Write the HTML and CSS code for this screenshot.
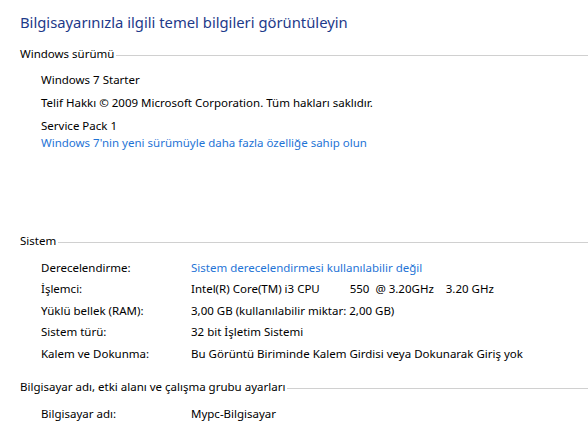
FILE: index.html
```html
<!DOCTYPE html>
<html lang="tr">
<head>
<meta charset="utf-8">
<title>Sistem</title>
<link rel="stylesheet" href="styles.css">
</head>
<body>
<main class="page">
  <h1 class="title">Bilgisayarınızla ilgili temel bilgileri görüntüleyin</h1>

  <section class="sec sec-version">
    <div class="sec-head"><span class="sec-name">Windows sürümü</span><span class="sec-line"></span></div>
    <div class="rows rows-version">
      <div class="row">Windows 7 Starter</div>
      <div class="row">Telif Hakkı © 2009 Microsoft Corporation. Tüm hakları saklıdır.</div>
      <div class="sp">
        <div>Service Pack 1</div>
        <a class="link" href="#">Windows 7'nin yeni sürümüyle daha fazla özelliğe sahip olun</a>
      </div>
    </div>
  </section>

  <section class="sec sec-system">
    <div class="sec-head"><span class="sec-name">Sistem</span><span class="sec-line"></span></div>
    <div class="rows rows-grid">
      <div class="label">Derecelendirme:</div>
      <div class="value"><a class="link" href="#">Sistem derecelendirmesi kullanılabilir değil</a></div>
      <div class="label">İşlemci:</div>
      <div class="value pre">Intel(R) Core(TM) i3 CPU          550  @ 3.20GHz    3.20 GHz</div>
      <div class="label">Yüklü bellek (RAM):</div>
      <div class="value">3,00 GB (kullanılabilir miktar: 2,00 GB)</div>
      <div class="label">Sistem türü:</div>
      <div class="value">32 bit İşletim Sistemi</div>
      <div class="label">Kalem ve Dokunma:</div>
      <div class="value">Bu Görüntü Biriminde Kalem Girdisi veya Dokunarak Giriş yok</div>
    </div>
  </section>

  <section class="sec sec-name-sec">
    <div class="sec-head"><span class="sec-name">Bilgisayar adı, etki alanı ve çalışma grubu ayarları</span><span class="sec-line"></span></div>
    <div class="rows rows-grid">
      <div class="label">Bilgisayar adı:</div>
      <div class="value">Mypc-Bilgisayar</div>
    </div>
  </section>
</main>
</body>
</html>
```
FILE: styles.css
```css
html, body {
  margin: 0;
  padding: 0;
  background: #ffffff;
  overflow: hidden;
}
body {
  font-family: "Noto Sans", "Open Sans", "DejaVu Sans", sans-serif;
  font-size: 11.5px;
  color: #000000;
}
.page {
  padding-left: 20px;
  padding-top: 12px;
}
.title {
  margin: 0;
  font-size: 14.8px;
  font-weight: normal;
  line-height: 20px;
  height: 20px;
  color: #1e3a8a;
}
.sec-head {
  display: flex;
  align-items: center;
  height: 16px;
  line-height: 16px;
}
.sec-name {
  white-space: nowrap;
}
.sec-line {
  flex: 1;
  height: 0;
  border-top: 1px solid #d0d0d0;
  margin-left: 2px;
  margin-top: 3px;
}
.sec-version {
  margin-top: 14px;
}
.rows {
  padding-left: 21px;
}
.rows-version {
  padding-top: 5.5px;
}
.row {
  line-height: 23px;
  white-space: nowrap;
}
.sp {
  margin-top: 3px;
  line-height: 17px;
}
.link {
  color: #1f74d6;
  text-decoration: none;
}
.sec-system {
  margin-top: 82.5px;
}
.rows-grid {
  display: grid;
  grid-template-columns: 150px 1fr;
  grid-auto-rows: 21.5px;
  align-items: center;
  padding-top: 7.25px;
  white-space: nowrap;
}
.pre {
  white-space: pre;
}
.sec-name-sec {
  margin-top: 15.25px;
}
```
